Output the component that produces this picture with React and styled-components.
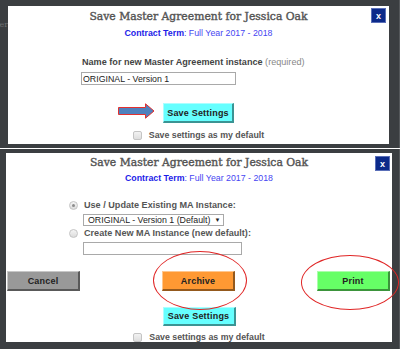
import React from "react";
import styled, { createGlobalStyle, css } from "styled-components";

const GlobalStyle = createGlobalStyle`
  html, body {
    margin: 0;
    padding: 0;
    background: #fff;
  }
  body {
    width: 400px;
    height: 349px;
    overflow: hidden;
    font-family: "Liberation Sans", Arial, sans-serif;
  }
`;

const Page = styled.div`
  display: flex;
  flex-direction: column;
  gap: 1px;
  width: 400px;
  height: 349px;
  background: #fff;
`;

const Shot = styled.section`
  display: flex;
  box-sizing: border-box;
  height: ${(p) => p.$height}px;
  padding: ${(p) => p.$pad};
  background: #3b3e41;
  border-right: 1px solid #55585b;
`;

const Gutter = styled.div`
  width: ${(p) => p.$width}px;
  flex: none;
  display: flex;
  justify-content: flex-end;
  white-space: nowrap;
  padding-top: 14px;
  font-family: "DejaVu Serif", serif;
  font-size: 8px;
  line-height: 10px;
  color: #6f7174;
`;

const Modal = styled.div`
  position: relative;
  flex: 1;
  display: flex;
  flex-direction: column;
  background: #fff;
`;

const CloseButton = styled.button`
  position: absolute;
  top: ${(p) => p.$top}px;
  right: ${(p) => p.$right}px;
  width: 15px;
  height: 15px;
  padding: 0;
  border: 1px solid #5a6fb8;
  background: #0c2a8a;
  color: #fff;
  font-family: "Liberation Sans", Arial, sans-serif;
  font-size: 9px;
  font-weight: bold;
  line-height: 12px;
`;

const Title = styled.h2`
  margin: ${(p) => p.$top}px 0 0;
  text-align: center;
  font-family: "DejaVu Serif", serif;
  font-size: 10.8px;
  font-weight: normal;
  line-height: 17px;
  color: #555;
  -webkit-text-stroke: 0.4px #555;
`;

const Term = styled.div`
  margin-top: ${(p) => p.$top}px;
  text-align: center;
  font-size: 8.8px;
  line-height: 12px;
  color: #4646f2;

  b {
    color: #1c1ce8;
  }
`;

const Field = styled.div`
  display: flex;
  flex-direction: column;
  align-items: flex-start;
  margin-top: ${(p) => p.$top}px;
  padding-left: ${(p) => p.$left}px;
`;

const FieldLabel = styled.label`
  padding-left: 1px;
  font-size: 9.1px;
  font-weight: bold;
  line-height: 12px;
  color: #444;
`;

const Hint = styled.span`
  font-weight: normal;
  color: #888;
`;

const TextInput = styled.input`
  box-sizing: border-box;
  width: ${(p) => p.$width}px;
  height: ${(p) => p.$height}px;
  margin: ${(p) => p.$margin};
  padding: 0 1px;
  border: 1px solid #a9a9a9;
  font-family: "Liberation Sans", Arial, sans-serif;
  font-size: 8.8px;
  color: #222;
  outline: none;
`;

const OptionRow = styled.div`
  display: flex;
  align-items: center;
  gap: 6px;
  margin-top: ${(p) => p.$top}px;
  font-size: 9.1px;
  font-weight: bold;
  line-height: 12px;
  color: #555;
`;

const Radio = styled.span`
  position: relative;
  width: 9px;
  height: 9px;
  box-sizing: border-box;
  border: 1px solid #c4c4c4;
  border-radius: 50%;
  background: linear-gradient(#f4f4f4, #dcdcdc);

  ${(p) =>
    p.$checked &&
    css`
      &::after {
        content: "";
        position: absolute;
        left: 2px;
        top: 2px;
        width: 3px;
        height: 3px;
        border-radius: 50%;
        background: #8c8c8c;
      }
    `}
`;

const SelectBox = styled.div`
  display: inline-flex;
  align-items: center;
  gap: 4px;
  box-sizing: border-box;
  height: 12px;
  margin: 3px 0 0 14px;
  padding: 0 3px 0 4px;
  border: 1px solid #a9a9a9;
  font-size: 8.8px;
  color: #222;

  span {
    font-size: 6px;
  }
`;

const Center = styled.div`
  display: flex;
  justify-content: center;
  margin-top: ${(p) => p.$top}px;
`;

const ButtonRow = styled.div`
  display: flex;
  justify-content: space-between;
  margin-top: ${(p) => p.$top}px;
  padding: 0 2px 0 1px;
`;

const ButtonWrap = styled.div`
  position: relative;
  display: flex;
`;

const tones = {
  cyan: "#66ffff",
  orange: "#ff9933",
  green: "#66ff66",
  gray: "#999999",
};

const Button = styled.button`
  box-sizing: border-box;
  width: ${(p) => p.$width}px;
  height: ${(p) => p.$height}px;
  padding: 0;
  border-style: solid;
  border-width: 1px 2px 2px 1px;
  border-color: rgba(255, 255, 255, 0.45) rgba(0, 0, 0, 0.42) rgba(0, 0, 0, 0.42)
    rgba(255, 255, 255, 0.45);
  background: ${(p) => tones[p.$tone]};
  font-family: "Liberation Sans", Arial, sans-serif;
  font-size: 9px;
  font-weight: bold;
  letter-spacing: 0.2px;
  color: #222;
`;

const Ring = styled.span`
  position: absolute;
  left: ${(p) => p.$left}px;
  top: ${(p) => p.$top}px;
  width: ${(p) => p.$w}px;
  height: ${(p) => p.$h}px;
  border: 1px solid #e02626;
  border-radius: 50%;
  pointer-events: none;
`;

const ArrowMark = styled.svg`
  position: absolute;
  left: -45px;
  top: 0;
`;

const CheckRow = styled.label`
  display: flex;
  justify-content: center;
  align-items: center;
  gap: 7px;
  margin-top: ${(p) => p.$top}px;
  font-size: 8.8px;
  font-weight: bold;
  line-height: 12px;
  color: #555;
`;

const CheckBox = styled.span`
  width: 9px;
  height: 9px;
  box-sizing: border-box;
  border: 1px solid #c4c4c4;
  border-radius: 2px;
  background: linear-gradient(#f2f2f2, #dedede);
`;

const Arrow = () => (
  <ArrowMark width="37" height="16" viewBox="0 0 37 16">
    <path
      d="M0.5 4.5 H27.5 V0.8 L36 8 L27.5 15.2 V11.5 H0.5 Z"
      fill="#4f81bd"
      stroke="#e3302f"
      strokeWidth="1"
    />
  </ArrowMark>
);

const Header = ({ top, termTop, closeTop, closeRight }) => (
  <>
    <CloseButton $top={closeTop} $right={closeRight}>
      x
    </CloseButton>
    <Title $top={top}>Save Master Agreement for Jessica Oak</Title>
    <Term $top={termTop}>
      <b>Contract Term</b>: Full Year 2017 - 2018
    </Term>
  </>
);

const DefaultCheck = ({ top }) => (
  <CheckRow $top={top}>
    <CheckBox />
    Save settings as my default
  </CheckRow>
);

export default function App() {
  return (
    <>
      <GlobalStyle />
      <Page>
        <Shot $height={148} $pad="6px 10px 4px 0">
          <Gutter $width={8}>er</Gutter>
          <Modal>
            <Header top={2} termTop={2} closeTop={2} closeRight={3} />
            <Field $top={17} $left={73}>
              <FieldLabel>
                Name for new Master Agreement instance <Hint>(required)</Hint>
              </FieldLabel>
              <TextInput
                defaultValue="ORIGINAL - Version 1"
                $width={155}
                $height={13}
                $margin="4px 0 0"
              />
            </Field>
            <Center $top={18}>
              <ButtonWrap>
                <Arrow />
                <Button $tone="cyan" $width={71} $height={20}>
                  Save Settings
                </Button>
              </ButtonWrap>
            </Center>
            <DefaultCheck top={6} />
          </Modal>
        </Shot>
        <Shot $height={200} $pad="4px 7px 7px 0">
          <Gutter $width={6} />
          <Modal>
            <Header top={1} termTop={1} closeTop={3} closeRight={2} />
            <Field $top={15} $left={63}>
              <OptionRow $top={0}>
                <Radio $checked />
                Use / Update Existing MA Instance:
              </OptionRow>
              <SelectBox>
                ORIGINAL - Version 1 (Default) <span>▼</span>
              </SelectBox>
              <OptionRow $top={1}>
                <Radio />
                Create New MA Instance (new default):
              </OptionRow>
              <TextInput $width={159} $height={13} $margin="3px 0 0 14px" />
            </Field>
            <ButtonRow $top={16}>
              <Button $tone="gray" $width={73} $height={20}>
                Cancel
              </Button>
              <ButtonWrap>
                <Ring $left={-9} $top={-20} $w={92} $h={57} />
                <Button $tone="orange" $width={73} $height={20}>
                  Archive
                </Button>
              </ButtonWrap>
              <ButtonWrap>
                <Ring $left={-16} $top={-16} $w={96} $h={53} />
                <Button $tone="green" $width={73} $height={20}>
                  Print
                </Button>
              </ButtonWrap>
            </ButtonRow>
            <Center $top={16}>
              <Button $tone="cyan" $width={73} $height={19}>
                Save Settings
              </Button>
            </Center>
            <DefaultCheck top={5} />
          </Modal>
        </Shot>
      </Page>
    </>
  );
}
